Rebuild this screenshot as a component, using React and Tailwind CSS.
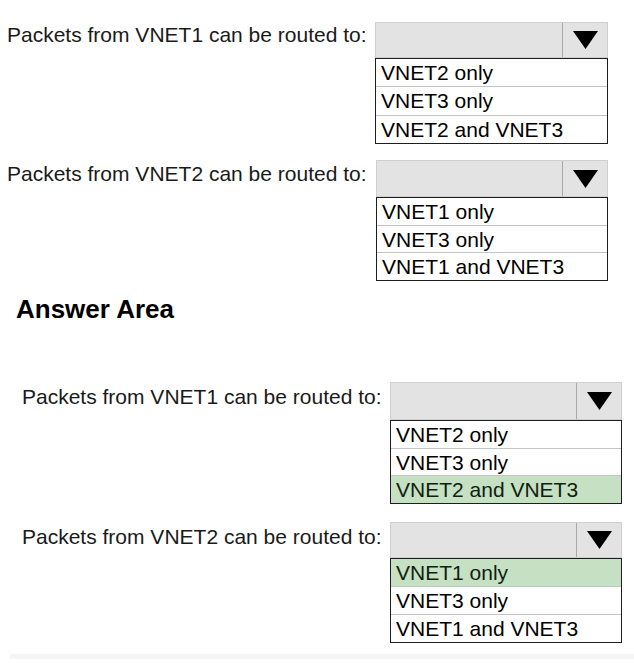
import React from "react";

const Arrow = () => (
  <svg width="25" height="18" viewBox="0 0 25 18">
    <polygon points="0,0 25,0 12.5,18" fill="#000" />
  </svg>
);

// dropdown box: grey header with arrow, list of options below
const Dropdown = ({ options, selected, boxClass, headClass, listClass }) => (
  <div className={`flex flex-col ${boxClass}`}>
    <div className={`flex border border-[#cfcfcf] bg-[#e3e3e3] ${headClass}`}>
      <div className="flex-1" />
      <div className="w-[45px] flex items-center justify-center border-l border-[#a8a8a8]">
        <Arrow />
      </div>
    </div>
    <div className={`flex flex-col border border-[#1e1e1e] bg-white ${listClass}`}>
      {options.map((opt, i) => (
        <div
          key={opt}
          className={`flex-1 flex items-center pl-[5px] text-[21px] leading-none ${
            i > 0 ? "border-t border-[#c4c4c4]" : ""
          } ${selected === i ? "bg-[#c6e0c4] text-[#102010]" : "text-black"}`}>
          {opt}
        </div>
      ))}
    </div>
  </div>
);

const Question = ({ label, options, selected, rowClass, labelClass, boxClass, headClass, listClass }) => (
  <div className={`flex items-start ${rowClass}`}>
    <div className={`text-[21px] leading-none text-[#1a1a1a] whitespace-nowrap ${labelClass}`}>
      {label}
    </div>
    <Dropdown
      options={options}
      selected={selected}
      boxClass={boxClass}
      headClass={headClass}
      listClass={listClass}
    />
  </div>
);

export default function App() {
  return (
    <div className="w-[634px] h-[663px] bg-white flex flex-col overflow-hidden font-['Liberation_Sans',Arial,sans-serif]">
      {/* Question area */}
      <Question
        rowClass="mt-[22px]"
        labelClass="ml-[7px] w-[368px] mt-[2px]"
        boxClass="w-[233px]"
        headClass="h-[36px]"
        listClass="h-[86px]"
        label="Packets from VNET1 can be routed to:"
        options={["VNET2 only", "VNET3 only", "VNET2 and VNET3"]}
      />
      <Question
        rowClass="mt-[16px]"
        labelClass="ml-[7px] w-[369px] mt-[3px]"
        boxClass="w-[232px]"
        headClass="h-[37px]"
        listClass="h-[84px]"
        label="Packets from VNET2 can be routed to:"
        options={["VNET1 only", "VNET3 only", "VNET1 and VNET3"]}
      />

      <div className="mt-[15px] ml-[16px] text-[26px] leading-none font-bold text-black">
        Answer Area
      </div>

      {/* Answer area */}
      <Question
        rowClass="mt-[60px]"
        labelClass="ml-[22px] w-[368px] mt-[4px]"
        boxClass="w-[232px]"
        headClass="h-[38px]"
        listClass="h-[84px]"
        label="Packets from VNET1 can be routed to:"
        options={["VNET2 only", "VNET3 only", "VNET2 and VNET3"]}
        selected={2}
      />
      <Question
        rowClass="mt-[18px]"
        labelClass="ml-[22px] w-[368px] mt-[4px]"
        boxClass="w-[232px]"
        headClass="h-[36px]"
        listClass="h-[85px]"
        label="Packets from VNET2 can be routed to:"
        options={["VNET1 only", "VNET3 only", "VNET1 and VNET3"]}
        selected={0}
      />

      <div className="mt-[11px] ml-[10px] h-[5px] bg-[#f5f5f5]" />
    </div>
  );
}
